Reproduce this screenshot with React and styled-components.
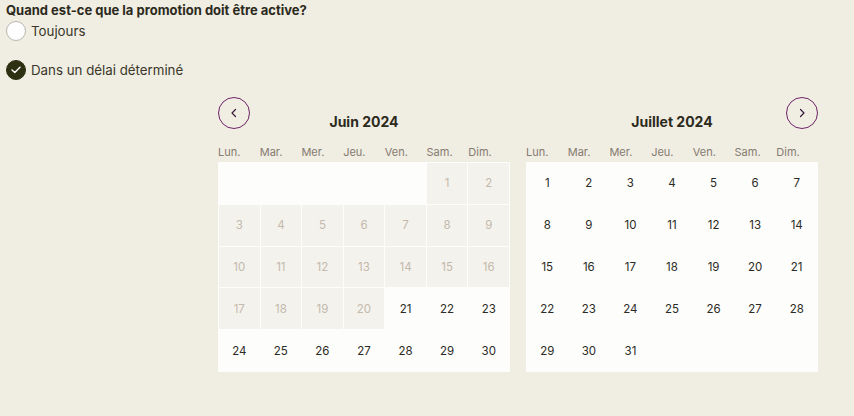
import React from 'react';
import styled, { createGlobalStyle } from 'styled-components';

const GlobalStyle = createGlobalStyle`
  html, body {
    margin: 0;
    padding: 0;
    background: #f0ede3;
    font-family: Inter, "Liberation Sans", sans-serif;
  }
`;

const Page = styled.div`
  width: 854px;
  height: 416px;
  padding: 2px 0 0 6px;
  box-sizing: border-box;
`;

const Question = styled.div`
  font-size: 13px;
  font-weight: 700;
  color: #2c2a1c;
  line-height: 16px;
`;

const Options = styled.div`
  display: flex;
  flex-direction: column;
  gap: 19px;
  margin-top: 3px;
`;

const Option = styled.label`
  display: flex;
  align-items: center;
  gap: 5px;
  font-size: 13.3px;
  color: #3a3728;
  line-height: 20px;
`;

const RadioDot = styled.span`
  width: 20px;
  height: 20px;
  box-sizing: border-box;
  border-radius: 50%;
  display: flex;
  align-items: center;
  justify-content: center;
  background: ${p => (p.checked ? '#2d3011' : '#ffffff')};
  border: 1px solid ${p => (p.checked ? '#2d3011' : '#b9b6ae')};
`;

const Calendars = styled.div`
  display: flex;
  gap: 16px;
  margin: 17px 0 0 212px;
`;

const Month = styled.div`
  width: 292px;
`;

const Header = styled.div`
  display: grid;
  grid-template-columns: 32px 1fr 32px;
  height: 48px;
`;

const NavButton = styled.button`
  width: 32px;
  height: 32px;
  border-radius: 50%;
  border: 1.5px solid #6d2466;
  background: transparent;
  padding: 0;
  display: flex;
  align-items: center;
  justify-content: center;
  cursor: pointer;
  visibility: ${p => (p.hidden ? 'hidden' : 'visible')};
`;

const MonthTitle = styled.div`
  text-align: center;
  font-size: 14px;
  font-weight: 700;
  color: #2c2a1c;
  padding-top: 17px;
  line-height: 16px;
`;

const Weekdays = styled.div`
  display: grid;
  grid-template-columns: repeat(7, 1fr);
  height: 17px;
`;

const Weekday = styled.div`
  font-size: 11px;
  color: #857b70;
  line-height: 14px;
`;

const Grid = styled.div`
  display: grid;
  grid-template-columns: repeat(7, 1fr);
  grid-auto-rows: 41.8px;
  background: #fdfdfb;
  padding: 1px 0 0 1px;
`;

const Day = styled.div`
  display: flex;
  align-items: center;
  justify-content: center;
  border-right: 1px solid #fdfdfb;
  border-bottom: 1px solid #fdfdfb;
  font-size: 11.5px;
  background: ${p => (p.disabled ? '#f4f2ec' : 'transparent')};
  color: ${p => (p.disabled ? '#c3b9ad' : '#2b2a24')};
`;

const weekdays = ['Lun.', 'Mar.', 'Mer.', 'Jeu.', 'Ven.', 'Sam.', 'Dim.'];

const months = [
  { title: 'Juin 2024', offset: 5, days: 30, disabledUntil: 20, nav: 'prev' },
  { title: 'Juillet 2024', offset: 0, days: 31, disabledUntil: 0, nav: 'next' }
];

const Chevron = ({ dir }) => (
  <svg width="10" height="10" viewBox="0 0 10 10" fill="none">
    <path
      d={dir === 'prev' ? 'M6.5 1.5 L3 5 L6.5 8.5' : 'M3.5 1.5 L7 5 L3.5 8.5'}
      stroke="#3a1838"
      strokeWidth="1.2"
      strokeLinecap="round"
      strokeLinejoin="round"
    />
  </svg>
);

const Calendar = ({ month }) => {
  const cells = [];
  for (let i = 0; i < month.offset; i++) cells.push(<Day key={`e${i}`} />);
  for (let d = 1; d <= month.days; d++) {
    cells.push(
      <Day key={d} disabled={d <= month.disabledUntil}>{d}</Day>
    );
  }
  return (
    <Month>
      <Header>
        <NavButton hidden={month.nav !== 'prev'} aria-label="Mois précédent">
          <Chevron dir="prev" />
        </NavButton>
        <MonthTitle>{month.title}</MonthTitle>
        <NavButton hidden={month.nav !== 'next'} aria-label="Mois suivant">
          <Chevron dir="next" />
        </NavButton>
      </Header>
      <Weekdays>
        {weekdays.map(w => <Weekday key={w}>{w}</Weekday>)}
      </Weekdays>
      <Grid>{cells}</Grid>
    </Month>
  );
};

export default function App () {
  return (
    <Page>
      <GlobalStyle />
      <Question>Quand est-ce que la promotion doit être active?</Question>
      <Options>
        <Option>
          <RadioDot />
          Toujours
        </Option>
        <Option>
          <RadioDot checked>
            <svg width="10" height="8" viewBox="0 0 10 8" fill="none">
              <path d="M1 4 L3.8 6.6 L9 1.2" stroke="#ffffff" strokeWidth="1.4" strokeLinecap="round" strokeLinejoin="round" />
            </svg>
          </RadioDot>
          Dans un délai déterminé
        </Option>
      </Options>
      <Calendars>
        {months.map(m => <Calendar key={m.title} month={m} />)}
      </Calendars>
    </Page>
  );
}
